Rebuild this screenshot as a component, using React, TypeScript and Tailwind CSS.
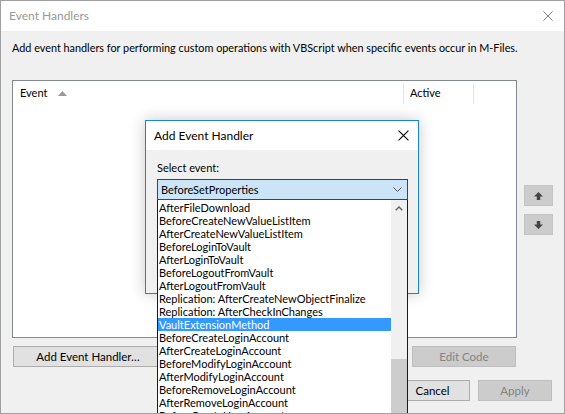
const events = [
  'AfterFileDownload',
  'BeforeCreateNewValueListItem',
  'AfterCreateNewValueListItem',
  'BeforeLoginToVault',
  'AfterLoginToVault',
  'BeforeLogoutFromVault',
  'AfterLogoutFromVault',
  'Replication: AfterCreateNewObjectFinalize',
  'Replication: AfterCheckInChanges',
  'VaultExtensionMethod',
  'BeforeCreateLoginAccount',
  'AfterCreateLoginAccount',
  'BeforeModifyLoginAccount',
  'AfterModifyLoginAccount',
  'BeforeRemoveLoginAccount',
  'AfterRemoveLoginAccount',
  'BeforeCreateUserAccount',
  'AfterCreateUserAccount',
]

function CloseX({ color, size }: { color: string; size: number }) {
  return (
    <svg width={size} height={size} viewBox="0 0 10 10">
      <path d="M0.5 0.5 L9.5 9.5 M9.5 0.5 L0.5 9.5" stroke={color} strokeWidth="1" fill="none" />
    </svg>
  )
}

function MoveArrow({ down }: { down?: boolean }) {
  return (
    <svg width="9" height="8" viewBox="0 0 9 8" className={down ? 'rotate-180' : ''}>
      <polygon points="4.5,0 9,4.5 6.2,4.5 6.2,8 2.8,8 2.8,4.5 0,4.5" fill="#444444" />
    </svg>
  )
}

export default function App() {
  return (
    <div className="w-[565px] h-[414px] bg-[#f0f0f0] border border-[#a0a0a0] relative overflow-hidden font-['Lato',sans-serif] text-[11px] text-black">
      {/* title bar */}
      <div className="h-[30px] bg-white flex items-center justify-between pl-[8px] pr-[11px]">
        <span className="text-[#999999] text-[12px] leading-[16px]">Event Handlers</span>
        <CloseX color="#808080" size={10} />
      </div>

      <div className="px-[11px]">
        <p className="pt-[9px] leading-[16px] text-[10.85px] whitespace-nowrap">
          Add event handlers for performing custom operations with VBScript when specific events occur in M-Files.
        </p>

        <div className="mt-[24px] flex">
          {/* list */}
          <div className="w-[506px] h-[258px] bg-white border border-[#828790]">
            <div className="h-[25px] flex">
              <div className="w-[390px] flex items-center pl-[7px] gap-[11px]">
                <span>Event</span>
                <svg width="9" height="5" viewBox="0 0 9 5">
                  <polygon points="4.5,0 9,5 0,5" fill="#9a9a9a" />
                </svg>
              </div>
              <div className="w-[71px] my-[2px] border-l border-r border-[#e5e5e5] flex items-center pl-[6px]">
                Active
              </div>
            </div>
          </div>
          {/* move buttons */}
          <div className="ml-[7px] pt-[105px] flex flex-col gap-[8px]">
            <div className="w-[29px] h-[21px] bg-[#cccccc] border border-[#c4c4c4] flex items-center justify-center">
              <MoveArrow />
            </div>
            <div className="w-[29px] h-[21px] bg-[#cccccc] border border-[#c4c4c4] flex items-center justify-center">
              <MoveArrow down />
            </div>
          </div>
        </div>

        <div className="mt-[8px] flex text-[11.5px]">
          <button className="ml-[1px] w-[150px] h-[21px] bg-[#e1e1e1] border border-[#adadad] leading-[19px]">
            Add Event Handler…
          </button>
          <button className="ml-auto mr-[37px] w-[104px] h-[21px] bg-[#cccccc] border border-[#bfbfbf] text-[#838383] leading-[19px]">
            Edit Code
          </button>
        </div>

        <div className="mt-[13px] flex justify-end gap-[8px] pr-[1px] text-[11.5px]">
          <button className="w-[75px] h-[21px] bg-[#e1e1e1] border border-[#adadad] leading-[19px]">Cancel</button>
          <button className="w-[74px] h-[21px] bg-[#cccccc] border border-[#bfbfbf] text-[#838383] leading-[19px]">
            Apply
          </button>
        </div>
      </div>

      {/* Add Event Handler dialog */}
      <div className="absolute left-[144px] top-[119px] w-[274px] h-[174px] bg-[#f0f0f0] border border-[#1883d7] shadow-[0_0_14px_rgba(0,0,0,0.22)]">
        <div className="h-[29px] bg-white flex items-center justify-between pl-[8px] pr-[9px]">
          <span className="text-[12px] leading-[16px]">Add Event Handler</span>
          <CloseX color="#000000" size={11} />
        </div>
        <div className="pl-[11px] pt-[10px]">
          <div className="leading-[16px]">Select event:</div>
          <div className="relative mt-[3px] w-[251px]">
            <div className="h-[21px] bg-[#cce4f7] border border-[#005499] flex items-center justify-between pl-[3px] pr-[5px]">
              <span className="leading-[16px]">BeforeSetProperties</span>
              <svg width="9" height="5" viewBox="0 0 9 5">
                <path d="M0.5 0.5 L4.5 4.5 L8.5 0.5" stroke="#555555" strokeWidth="1" fill="none" />
              </svg>
            </div>
            {/* dropdown */}
            <div className="absolute left-0 top-[21px] w-[251px] h-[240px] bg-white border-l border-r border-[#1a1a1a] flex">
              <div className="w-[233px] pt-[1px]">
                {events.map((e) => (
                  <div
                    key={e}
                    className={`h-[13px] leading-[13px] pl-[1px] whitespace-nowrap ${
                      e === 'VaultExtensionMethod' ? 'bg-[#3399ff] text-white' : ''
                    }`}
                  >
                    {e}
                  </div>
                ))}
              </div>
              <div className="w-[16px] bg-[#f0f0f0] flex flex-col">
                <div className="h-[17px] flex items-center justify-center">
                  <svg width="8" height="5" viewBox="0 0 8 5">
                    <path d="M0.7 4.3 L4 1 L7.3 4.3" stroke="#606060" strokeWidth="1.4" fill="none" />
                  </svg>
                </div>
                <div className="mt-[142px] flex-1 bg-[#cdcdcd]" />
              </div>
            </div>
          </div>
        </div>
      </div>
    </div>
  )
}
